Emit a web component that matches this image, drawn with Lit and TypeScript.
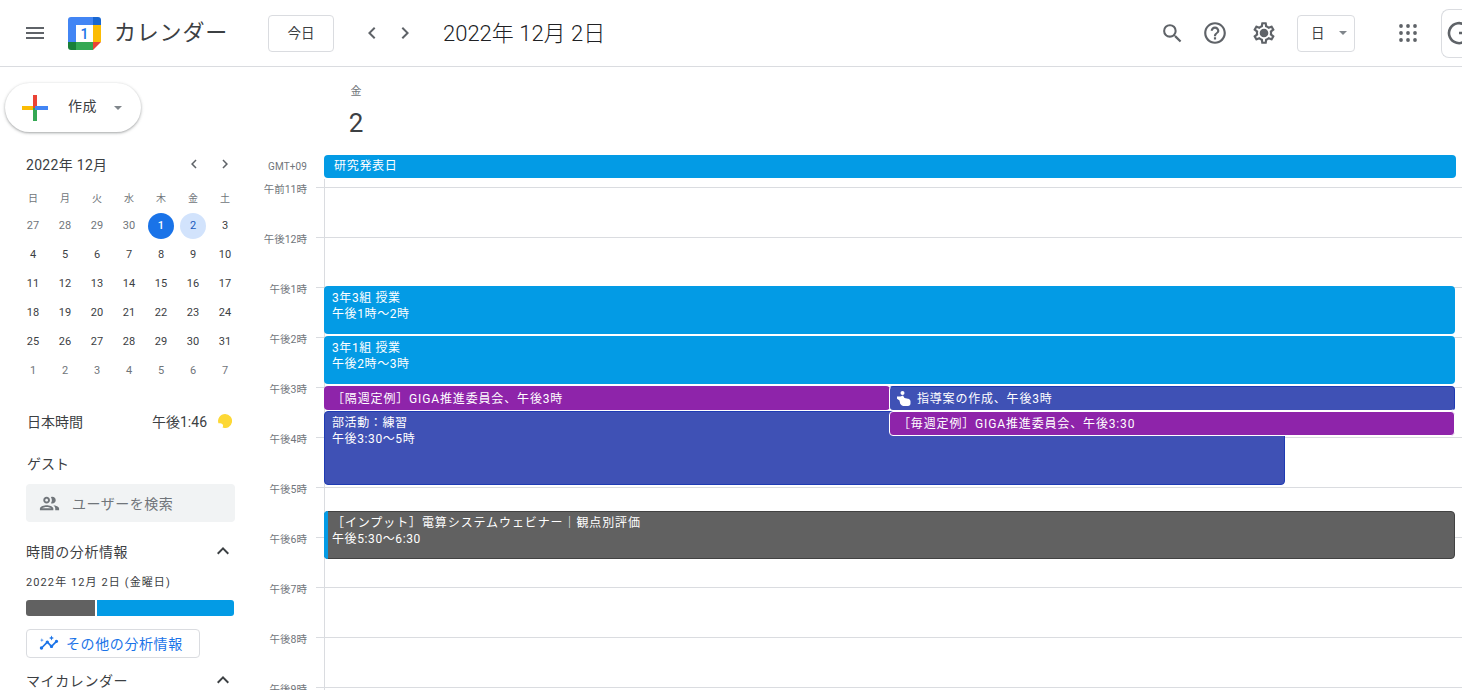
import { LitElement, html, css, svg } from "lit";
import { customElement } from "lit/decorators.js";

const icon = (d: string, size = 24, cls = "") =>
  html`<svg class=${cls} width=${size} height=${size} viewBox="0 0 24 24" fill="currentColor"><path d=${d}></path></svg>`;

const P = {
  menu: "M3 18h18v-2H3v2zm0-5h18v-2H3v2zm0-7v2h18V6H3z",
  left: "M15.41 7.41L14 6l-6 6 6 6 1.41-1.41L10.83 12z",
  right: "M10 6L8.59 7.41 13.17 12l-4.58 4.59L10 18l6-6z",
  search:
    "M15.5 14h-.79l-.28-.27A6.471 6.471 0 0 0 16 9.5 6.5 6.5 0 1 0 9.5 16c1.61 0 3.09-.59 4.23-1.57l.27.28v.79l5 4.99L20.49 19l-4.99-5zm-6 0C7.01 14 5 11.99 5 9.5S7.01 5 9.5 5 14 7.01 14 9.5 11.99 14 9.5 14z",
  help:
    "M11 18h2v-2h-2v2zm1-16C6.48 2 2 6.48 2 12s4.48 10 10 10 10-4.48 10-10S17.52 2 12 2zm0 18c-4.41 0-8-3.59-8-8s3.59-8 8-8 8 3.59 8 8-3.59 8-8 8zm0-14c-2.21 0-4 1.79-4 4h2c0-1.1.9-2 2-2s2 .9 2 2c0 2-3 1.75-3 5h2c0-2.25 3-2.5 3-5 0-2.21-1.79-4-4-4z",
  gear:
    "M19.43 12.98c.04-.32.07-.64.07-.98 0-.34-.03-.66-.07-.98l2.11-1.65c.19-.15.24-.42.12-.64l-2-3.46c-.09-.16-.26-.25-.44-.25-.06 0-.12.01-.17.03l-2.49 1c-.52-.4-1.08-.73-1.69-.98l-.38-2.65C14.46 2.18 14.25 2 14 2h-4c-.25 0-.46.18-.49.42l-.38 2.65c-.61.25-1.17.59-1.69.98l-2.49-1c-.06-.02-.12-.03-.18-.03-.17 0-.34.09-.43.25l-2 3.46c-.13.22-.07.49.12.64l2.11 1.65c-.04.32-.07.65-.07.98 0 .33.03.66.07.98l-2.11 1.65c-.19.15-.24.42-.12.64l2 3.46c.09.16.26.25.44.25.06 0 .12-.01.17-.03l2.49-1c.52.4 1.08.73 1.69.98l.38 2.65c.03.24.24.42.49.42h4c.25 0 .46-.18.49-.42l.38-2.65c.61-.25 1.17-.59 1.69-.98l2.49 1c.06.02.12.03.18.03.17 0 .34-.09.43-.25l2-3.46c.12-.22.07-.49-.12-.64l-2.11-1.65zm-1.98-1.71c.04.31.05.52.05.73 0 .21-.02.43-.05.73l-.14 1.13.89.7 1.08.84-.7 1.21-1.27-.51-1.04-.42-.9.68c-.43.32-.84.56-1.25.73l-1.06.43-.16 1.13-.2 1.35h-1.4l-.19-1.35-.16-1.13-1.06-.43c-.43-.18-.83-.41-1.23-.71l-.91-.7-1.06.43-1.27.51-.7-1.21 1.08-.84.89-.7-.14-1.13c-.03-.31-.05-.54-.05-.74s.02-.43.05-.73l.14-1.13-.89-.7-1.08-.84.7-1.21 1.27.51 1.04.42.9-.68c.43-.32.84-.56 1.25-.73l1.06-.43.16-1.13.2-1.35h1.39l.19 1.35.16 1.13 1.06.43c.43.18.83.41 1.23.71l.91.7 1.06-.43 1.27-.51.7 1.21-1.07.85-.89.7.14 1.13zM12 8c-2.21 0-4 1.79-4 4s1.79 4 4 4 4-1.79 4-4-1.79-4-4-4z",
  people:
    "M9 13.75c-2.34 0-7 1.17-7 3.5V19h14v-1.75c0-2.33-4.66-3.5-7-3.5zM4.34 17c.84-.58 2.87-1.25 4.66-1.25s3.82.67 4.66 1.25H4.34zM9 12c1.93 0 3.5-1.57 3.5-3.5S10.93 5 9 5 5.5 6.57 5.5 8.5 7.07 12 9 12zm0-5c.83 0 1.5.67 1.5 1.5S9.83 10 9 10s-1.5-.67-1.5-1.5S8.17 7 9 7zm7.04 6.81c1.16.84 1.96 1.96 1.96 3.44V19h4v-1.75c0-2.02-3.5-3.17-5.96-3.44zM15 12c1.93 0 3.5-1.57 3.5-3.5S16.93 5 15 5c-.54 0-1.04.13-1.5.35.63.89 1 1.98 1 3.15s-.37 2.26-1 3.15c.46.22.96.35 1.5.35z",
  up: "M12 8l-6 6 1.41 1.41L12 10.83l4.59 4.58L18 14z",
  insights:
    "M21 8c-1.45 0-2.26 1.44-1.93 2.51l-3.55 3.56c-.3-.09-.74-.09-1.04 0l-2.55-2.55C12.27 10.45 11.46 9 10 9c-1.45 0-2.27 1.44-1.93 2.52l-4.56 4.55C2.44 15.74 1 16.55 1 18c0 1.1.9 2 2 2 1.45 0 2.26-1.44 1.93-2.51l4.55-4.56c.3.09.74.09 1.04 0l2.55 2.55C12.73 16.55 13.54 18 15 18c1.45 0 2.27-1.44 1.93-2.52l3.56-3.55c1.07.33 2.51-.48 2.51-1.93 0-1.1-.9-2-2-2zM15 9l.94-2.07L18 6l-2.06-.93L15 3l-.92 2.07L12 6l2.08.93zM3.5 11L4 9l2-.5L4 8l-.5-2L3 8l-2 .5L3 9z",
};

const logo = html`<svg class="logo" width="33" height="33" viewBox="0 0 33 33">
  <rect x="8" y="8" width="17" height="17" fill="#fff"></rect>
  <path d="M8 0h17v8H8z" fill="#4285f4"></path>
  <path d="M0 8h8v17H0z" fill="#4285f4"></path>
  <path d="M3 0h5v8H0V3a3 3 0 0 1 3-3z" fill="#4285f4"></path>
  <path d="M25 8h8v17h-8z" fill="#fbbc04"></path>
  <path d="M8 25h17v8H8z" fill="#34a853"></path>
  <path d="M0 25h8v8H3a3 3 0 0 1-3-3z" fill="#188038"></path>
  <path d="M25 0h5a3 3 0 0 1 3 3v5h-8z" fill="#1967d2"></path>
  <path d="M25 25h8l-8 8z" fill="#ea4335"></path>
  <text x="16.5" y="21.5" text-anchor="middle" font-size="14" font-weight="500" font-family="Roboto, sans-serif" fill="#1a73e8">1</text>
</svg>`;

const plus = html`<svg width="26" height="26" viewBox="0 0 26 26">
  <path d="M0 11h13v4H0z" fill="#fbbc04"></path>
  <path d="M11 0h4v13h-4z" fill="#ea4335"></path>
  <path d="M11 13h4v13h-4z" fill="#34a853"></path>
  <path d="M13 11h13v4H13z" fill="#4285f4"></path>
</svg>`;

const gridIcon = html`<svg width="24" height="24" viewBox="0 0 24 24" fill="#5f6368">
  ${[5, 12, 19].map((y) => [5, 12, 19].map((x) => svg`<circle cx=${x} cy=${y} r="1.9"></circle>`))}
</svg>`;

const hand = html`<svg class="hand" width="14" height="15" viewBox="0 0 14 15" fill="#fff">
  <circle cx="5.500" cy="2" r="2"></circle>
  <path d="M0 5.500h3.500L6 4.500l1.500 2.500 3.500.8c1.500.3 2.500 1.200 2.500 2.700v2c0 1.300-1 2.400-2.500 2.400H6.500C5 14.900 4 14 3.200 12.800L2.500 9.500 0 7.800z"></path>
</svg>`;

const weekdays = ["日", "月", "火", "水", "木", "金", "土"];
const days: [string, boolean][] = [
  ...[27, 28, 29, 30].map((d) => [String(d), true] as [string, boolean]),
  ...Array.from({ length: 31 }, (_, i) => [String(i + 1), false] as [string, boolean]),
  ...[1, 2, 3, 4, 5, 6, 7].map((d) => [String(d), true] as [string, boolean]),
];

const hours = ["午前11時", "午後12時", "午後1時", "午後2時", "午後3時", "午後4時", "午後5時", "午後6時", "午後7時", "午後8時", "午後9時"];

type Ev = {
  l: number; t: number; w: number; h: number; c: string;
  lines: string[]; stripe?: boolean; touch?: boolean;
};
const events: Ev[] = [
  { l: 0, t: 107, w: 1131, h: 48, c: "ev-blue", lines: ["3年3組 授業", "午後1時～2時"] },
  { l: 0, t: 157, w: 1131, h: 48, c: "ev-blue", lines: ["3年1組 授業", "午後2時～3時"] },
  { l: 0, t: 207, w: 566, h: 24, c: "ev-purple ev-single", lines: ["［隔週定例］GIGA推進委員会、午後3時"] },
  { l: 0, t: 232, w: 961, h: 74, c: "ev-indigo", lines: ["部活動：練習", "午後3:30～5時"] },
  { l: 565, t: 207, w: 566, h: 25, c: "ev-indigo ev-single ev-over", lines: ["指導案の作成、午後3時"], touch: true },
  { l: 565, t: 232, w: 566, h: 25, c: "ev-purple ev-single ev-over", lines: ["［毎週定例］GIGA推進委員会、午後3:30"] },
  { l: 0, t: 332, w: 1131, h: 48, c: "ev-gray", lines: ["［インプット］電算システムウェビナー｜観点別評価", "午後5:30～6:30"], stripe: true },
];

@customElement("app-root")
export class AppRoot extends LitElement {
  static styles = css`
    :host {
      display: flex;
      flex-direction: column;
      width: 1462px;
      height: 690px;
      overflow: hidden;
      background: #fff;
      color: #3c4043;
      font-family: Roboto, "Noto Sans CJK JP", sans-serif;
    }
    svg { display: block; flex: none; }
    .header {
      flex: none;
      height: 66px;
      border-bottom: 1px solid #dadce0;
      display: flex;
      align-items: center;
      color: #5f6368;
    }
    .menu { margin-left: 23px; }
    .logo { margin-left: 21px; }
    .brand { margin-left: 13px; width: 154px; font-size: 22px; letter-spacing: .8px; color: #3c4043; white-space: nowrap; line-height: 28px; }
    .outlined {
      border: 1px solid #dadce0;
      border-radius: 4px;
      box-sizing: border-box;
      height: 37px;
      display: flex;
      align-items: center;
      font-size: 14px;
      color: #3c4043;
    }
    .today { width: 66px; justify-content: center; padding-bottom: 2px; font-size: 13.500px; }
    .nav-l { margin-left: 26px; }
    .nav-r { margin-left: 9px; }
    .title { margin-left: 26px; font-size: 22px; font-weight: 300; color: #202124; flex: 1; white-space: nowrap; padding-bottom: 4px; }
    .h-search { margin-right: 17px; }
    .h-help { margin-right: 23px; }
    .h-gear { margin-right: 20px; }
    .view { width: 58px; padding: 0 0 3px 13px; gap: 14px; font-size: 13.500px; }
    .caret { width: 0; height: 0; border: 4px solid transparent; border-top-color: #80868b; border-bottom: 0; }
    .view .caret { margin-top: 3px; }
    .apps { margin-left: 41px; }
    .account {
      margin-left: 21px;
      width: 21px;
      height: 49px;
      box-sizing: border-box;
      border: 1px solid #dadce0;
      border-right: 0;
      border-radius: 8px 0 0 8px;
      padding: 11px 0 0 5px;
      flex: none;
      overflow: hidden;
    }

    .body { flex: 1; min-height: 0; display: flex; }
    .side { flex: none; width: 256px; overflow: hidden; }
    .create {
      margin: 16px 0 0 5px;
      width: 136px;
      height: 49px;
      box-sizing: border-box;
      border-radius: 25px;
      background: #fff;
      box-shadow: 0 1px 2px rgba(60,64,67,.3), 0 1px 3px 1px rgba(60,64,67,.15);
      display: flex;
      align-items: center;
      padding-left: 17px;
      font-size: 14px;
      letter-spacing: .4px;
      color: #3c4043;
    }
    .create span { margin-left: 20px; width: 46px; padding-bottom: 5px; }
    .mini-head {
      margin: 22px 0 0 26px;
      height: 20px;
      display: flex;
      align-items: center;
      font-size: 14px;
      letter-spacing: .3px;
      color: #3c4043;
    }
    .mini-head span { width: 159px; white-space: nowrap; }
    .mini-head svg { color: #5f6368; }
    .mini-head .gap { margin-left: 13px; }
    .mini {
      margin: 8px 0 0 17px;
      display: grid;
      grid-template-columns: repeat(7, 32px);
      grid-auto-rows: 29px;
      font-size: 11px;
      text-align: center;
      color: #3c4043;
    }
    .mini .wd { color: #70757a; font-size: 10px; height: 24px; line-height: 33px; }
    .cell { display: flex; align-items: center; justify-content: center; }
    .cell.other { color: #70757a; }
    .cell b {
      font-weight: 400;
      width: 26px;
      height: 26px;
      border-radius: 50%;
      display: flex;
      align-items: center;
      justify-content: center;
    }
    .cell.today-c b { background: #1a73e8; color: #fff; font-weight: 500; }
    .cell.sel b { background: #d2e3fc; color: #185abc; }
    .row {
      margin: 0 21px 0 27px;
      display: flex;
      align-items: center;
      font-size: 14px;
      height: 20px;
      color: #3c4043;
    }
    .tz { margin-top: 26px; }
    .tz .time { margin-left: auto; margin-right: 3px; }
    .moon { margin-left: 8px; margin-right: 3px; }
    .guest { margin-top: 22px; }
    .search {
      margin: 11px 21px 0 26px;
      height: 38px;
      border-radius: 4px;
      background: #f1f3f4;
      display: flex;
      align-items: center;
      padding-left: 12px;
      font-size: 14px;
      letter-spacing: .5px;
      color: #70757a;
    }
    .search span { margin-left: 11px; }
    .search svg { color: #70757a; }
    .sect { margin: 19px 0 0 26px; width: 209px; display: flex; align-items: center; justify-content: space-between; font-size: 14px; letter-spacing: .6px; height: 20px; color: #3c4043; }
    .sect svg { color: #3c4043; }
    .date-line { margin: 14px 0 0 26px; font-size: 11px; letter-spacing: 1.100px; color: #3c4043; height: 15px; line-height: 15px; white-space: nowrap; }
    .bar { margin: 10px 22px 0 26px; height: 16px; display: flex; gap: 2px; }
    .bar i { display: block; }
    .bar .g { width: 69px; background: #616161; border-radius: 3px 0 0 3px; }
    .bar .b { flex: 1; background: #039be5; border-radius: 0 3px 3px 0; }
    .more {
      margin: 13px 0 0 26px;
      width: 174px;
      height: 29px;
      box-sizing: border-box;
      border: 1px solid #dadce0;
      border-radius: 4px;
      display: flex;
      align-items: center;
      padding: 0 0 2px 12px;
      gap: 7px;
      font-size: 14px;
      letter-spacing: .6px;
      color: #1a73e8;
    }
    .mycal { margin-top: 12px; }

    .main { flex: 1; min-width: 0; display: flex; flex-direction: column; }
    .dayhead { flex: none; height: 88px; padding-left: 100px; box-sizing: border-box; display: flex; flex-direction: column; }
    .dow { width: 0; margin-top: 17px; font-size: 11px; color: #70757a; display: flex; justify-content: center; line-height: 16px; white-space: nowrap; }
    .dnum { width: 0; margin-top: 7px; font-size: 26px; color: #3c4043; display: flex; justify-content: center; line-height: 32px; }
    .allday { flex: none; height: 24px; display: flex; }
    .gmt { width: 51px; text-align: right; font-size: 10px; letter-spacing: .1px; color: #70757a; line-height: 23px; flex: none; }
    .allday-ev {
      margin-left: 17px;
      width: 1132px;
      height: 23px;
      box-sizing: border-box;
      background: #039be5;
      border-radius: 4px;
      color: #fff;
      font-size: 12px;
      letter-spacing: .7px;
      padding-left: 10px;
      line-height: 22px;
    }
    .timeline { flex: 1; min-height: 0; position: relative; overflow: hidden; padding-top: 8px; box-sizing: border-box; }
    .vline { position: absolute; left: 68px; top: 0; bottom: 0; width: 1px; background: #dadce0; }
    .hour { height: 50px; box-sizing: border-box; display: flex; }
    .hour label { width: 51px; font-size: 10.500px; color: #70757a; text-align: right; line-height: 14px; margin-top: -4px; flex: none; white-space: nowrap; }
    .hour i { display: block; margin-left: 9px; flex: 1; height: 1px; background: #dadce0; }
    .canvas { position: absolute; left: 68px; top: 0; right: 0; bottom: 0; }
    .ev {
      position: absolute;
      box-sizing: border-box;
      border-radius: 4px;
      color: #fff;
      font-size: 12px;
      line-height: 16px;
      letter-spacing: .6px;
      padding: 4px 8px;
      overflow: hidden;
      white-space: nowrap;
    }
    .ev-blue { background: #039be5; }
    .ev-purple { background: #8e24aa; }
    .ev-indigo { background: #3f51b5; border: 1px solid #1f3bb3; padding: 3px 7px; }
    .ev-gray { background: #616161; border: 1px solid #424242; padding: 3px 7px; overflow: visible; }
    .ev-single { padding-top: 1px; padding-bottom: 0; display: flex; align-items: center; gap: 5px; letter-spacing: .85px; }
    .ev-over { border: 1px solid #fff; padding-top: 0; }
    .ev-over.ev-indigo { border-top-color: #1f3bb3; border-right-color: #1f3bb3; letter-spacing: .8px; gap: 6px; }
    .ev-gray div:first-of-type { letter-spacing: .9px; }
    .stripe { position: absolute; left: -1px; top: -1px; bottom: -1px; width: 4px; background: #039be5; border-radius: 4px 0 0 4px; }
  `;

  render() {
    return html`
      <div class="header">
        ${icon(P.menu, 24, "menu")}
        ${logo}
        <div class="brand">カレンダー</div>
        <div class="outlined today">今日</div>
        ${icon(P.left, 24, "nav-l")}
        ${icon(P.right, 24, "nav-r")}
        <div class="title">2022年 12月 2日</div>
        ${icon(P.search, 25, "h-search")}
        ${icon(P.help, 26, "h-help")}
        ${icon(P.gear, 26, "h-gear")}
        <div class="outlined view">日<i class="caret"></i></div>
        <span class="apps">${gridIcon}</span>
        <div class="account">
          <svg width="24" height="24" viewBox="0 0 24 24" fill="none" stroke="#5f6368" stroke-width="2.600">
            <path d="M19 5A10 10 0 1 0 22 12H12"></path>
          </svg>
        </div>
      </div>
      <div class="body">
        <div class="side">
          <div class="create">${plus}<span>作成</span><i class="caret"></i></div>
          <div class="mini-head">
            <span>2022年 12月</span>
            ${icon(P.left, 18)}
            ${icon(P.right, 18, "gap")}
          </div>
          <div class="mini">
            ${weekdays.map((w) => html`<div class="wd">${w}</div>`)}
            ${days.map(([d, other], i) => html`<div class="cell ${other ? "other" : ""} ${i === 4 ? "today-c" : ""} ${i === 5 ? "sel" : ""}"><b>${d}</b></div>`)}
          </div>
          <div class="row tz">
            <span>日本時間</span>
            <span class="time">午後1:46</span>
            <svg class="moon" width="14" height="14" viewBox="0 0 14 14"><path d="M7 0a7 7 0 1 1-2.500 13.500c.8-1 .8-2.300 0-3.200C3.500 9.200 2 9 .4 9.200A7 7 0 0 1 7 0z" fill="#fdd835"></path></svg>
          </div>
          <div class="row guest">ゲスト</div>
          <div class="search">${icon(P.people, 23)}<span>ユーザーを検索</span></div>
          <div class="sect"><span>時間の分析情報</span>${icon(P.up, 24)}</div>
          <div class="date-line">2022年 12月 2日 (金曜日)</div>
          <div class="bar"><i class="g"></i><i class="b"></i></div>
          <div class="more">${icon(P.insights, 20)}その他の分析情報</div>
          <div class="sect mycal"><span>マイカレンダー</span>${icon(P.up, 24)}</div>
        </div>
        <div class="main">
          <div class="dayhead">
            <div class="dow">金</div>
            <div class="dnum">2</div>
          </div>
          <div class="allday">
            <div class="gmt">GMT+09</div>
            <div class="allday-ev">研究発表日</div>
          </div>
          <div class="timeline">
            ${hours.map((h) => html`<div class="hour"><label>${h}</label><i></i></div>`)}
            <div class="vline"></div>
            <div class="canvas">
              ${events.map((e) => html`<div class="ev ${e.c}" style="left:${e.l}px;top:${e.t}px;width:${e.w}px;height:${e.h}px">
                ${e.stripe ? html`<i class="stripe"></i>` : ""}
                ${e.touch ? hand : ""}
                ${e.lines.map((t) => html`<div>${t}</div>`)}
              </div>`)}
            </div>
          </div>
        </div>
      </div>
    `;
  }
}
